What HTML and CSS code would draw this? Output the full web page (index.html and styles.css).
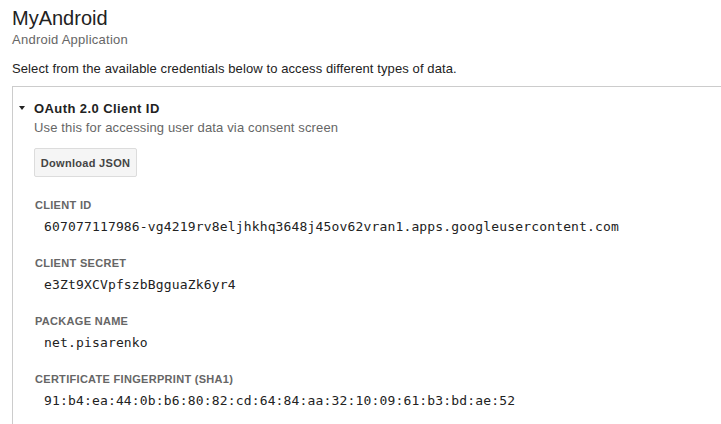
FILE: index.html
```html
<!DOCTYPE html>
<html>
<head>
<meta charset="utf-8">
<link rel="stylesheet" href="styles.css">
</head>
<body>
<div class="page">
  <h1 class="title">MyAndroid</h1>
  <div class="subtitle">Android Application</div>
  <p class="intro">Select from the available credentials below to access different types of data.</p>
  <div class="panel">
    <div class="panel-head">
      <span class="caret"></span>
      <span class="panel-title">OAuth 2.0 Client ID</span>
    </div>
    <div class="panel-body">
      <div class="desc">Use this for accessing user data via consent screen</div>
      <button class="btn">Download JSON</button>
      <div class="field">
        <div class="label">Client ID</div>
        <div class="value">607077117986-vg4219rv8eljhkhq3648j45ov62vran1.apps.googleusercontent.com</div>
      </div>
      <div class="field">
        <div class="label">Client secret</div>
        <div class="value">e3Zt9XCVpfszbBgguaZk6yr4</div>
      </div>
      <div class="field">
        <div class="label">Package name</div>
        <div class="value">net.pisarenko</div>
      </div>
      <div class="field">
        <div class="label">Certificate fingerprint (SHA1)</div>
        <div class="value">91:b4:ea:44:0b:b6:80:82:cd:64:84:aa:32:10:09:61:b3:bd:ae:52</div>
      </div>
    </div>
  </div>
</div>
</body>
</html>
```
FILE: styles.css
```css
html, body {
  margin: 0;
  padding: 0;
  background: #fff;
}
body {
  font-family: "Liberation Sans", Arial, sans-serif;
  color: #222;
  overflow: hidden;
}
.page {
  box-sizing: border-box;
  height: 100vh;
  display: flex;
  flex-direction: column;
  padding: 6px 0 0 12px;
}
.title {
  margin: 0;
  font-size: 20px;
  font-weight: normal;
  line-height: 24px;
  color: #222;
}
.subtitle {
  font-size: 13px;
  color: #666;
  line-height: 16px;
  margin-top: 2px;
  letter-spacing: 0.25px;
}
.intro {
  margin: 13px 0 0 0;
  font-size: 13px;
  line-height: 16px;
  color: #222;
  letter-spacing: 0.1px;
}
.panel {
  flex: 1;
  min-height: 0;
  margin-top: 9px;
  border-top: 1px solid #ccc;
  border-left: 1px solid #ccc;
  padding: 13px 0 0 6px;
}
.panel-head {
  display: flex;
  align-items: center;
  height: 16px;
}
.caret {
  width: 0;
  height: 0;
  border-left: 3.5px solid transparent;
  border-right: 3.5px solid transparent;
  border-top: 4px solid #222;
  margin-right: 9px;
}
.panel-title {
  font-size: 13px;
  font-weight: bold;
  color: #222;
  letter-spacing: 0.42px;
}
.panel-body {
  padding-left: 15px;
}
.desc {
  font-size: 13px;
  color: #666;
  line-height: 16px;
  margin-top: 4px;
  letter-spacing: 0.14px;
}
.btn {
  display: block;
  margin-top: 12px;
  width: 103px;
  height: 29px;
  padding: 0;
  background: #f5f5f5;
  border: 1px solid #dcdcdc;
  border-radius: 2px;
  font-family: "Liberation Sans", Arial, sans-serif;
  font-size: 11px;
  font-weight: bold;
  color: #444;
  letter-spacing: 0.3px;
}
.btn + .field {
  margin-top: 21px;
}
.field + .field {
  margin-top: 21px;
}
.label {
  font-size: 11px;
  font-weight: bold;
  color: #666;
  text-transform: uppercase;
  line-height: 14px;
  letter-spacing: 0.3px;
  padding-left: 1px;
}
.value {
  margin-top: 7px;
  padding-left: 10px;
  font-family: "DejaVu Sans Mono", monospace;
  font-size: 13px;
  line-height: 16px;
  color: #222;
  letter-spacing: 0.16px;
}
```
